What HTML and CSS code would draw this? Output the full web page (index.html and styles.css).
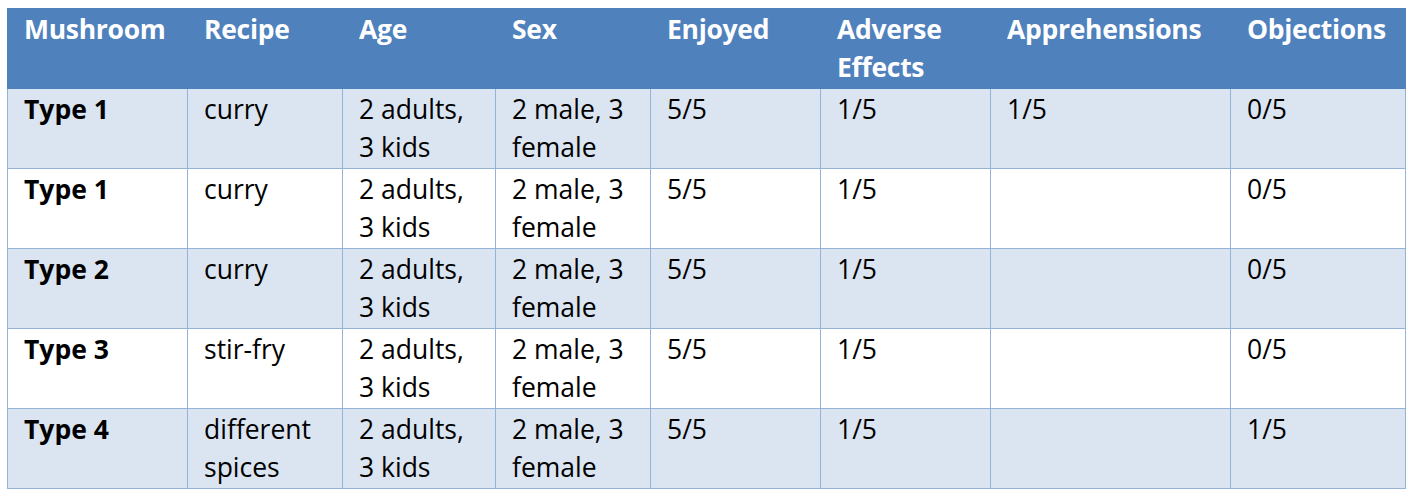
FILE: index.html
```html
<!DOCTYPE html>
<html>
<head>
<meta charset="utf-8">
<link rel="stylesheet" href="styles.css">
</head>
<body>
<table class="grid">
  <colgroup>
    <col class="c1"><col class="c2"><col class="c3"><col class="c4"><col class="c5"><col class="c6"><col class="c7"><col class="c8">
  </colgroup>
  <thead>
    <tr>
      <th>Mushroom</th><th>Recipe</th><th>Age</th><th>Sex</th><th>Enjoyed</th><th>Adverse Effects</th><th>Apprehensions</th><th>Objections</th>
    </tr>
  </thead>
  <tbody>
    <tr class="band">
      <td class="name">Type 1</td><td>curry</td><td>2 adults, 3 kids</td><td>2 male, 3 female</td><td>5/5</td><td>1/5</td><td>1/5</td><td>0/5</td>
    </tr>
    <tr>
      <td class="name">Type 1</td><td>curry</td><td>2 adults, 3 kids</td><td>2 male, 3 female</td><td>5/5</td><td>1/5</td><td></td><td>0/5</td>
    </tr>
    <tr class="band">
      <td class="name">Type 2</td><td>curry</td><td>2 adults, 3 kids</td><td>2 male, 3 female</td><td>5/5</td><td>1/5</td><td></td><td>0/5</td>
    </tr>
    <tr>
      <td class="name">Type 3</td><td>stir-fry</td><td>2 adults, 3 kids</td><td>2 male, 3 female</td><td>5/5</td><td>1/5</td><td></td><td>0/5</td>
    </tr>
    <tr class="band">
      <td class="name">Type 4</td><td>different spices</td><td>2 adults, 3 kids</td><td>2 male, 3 female</td><td>5/5</td><td>1/5</td><td></td><td>1/5</td>
    </tr>
  </tbody>
</table>
</body>
</html>
```
FILE: styles.css
```css
html, body {
  margin: 0;
  padding: 0;
  background: #ffffff;
}
body {
  padding: 8px 0 0 7px;
  font-family: "Open Sans", Lato, "Liberation Sans", sans-serif;
}
.grid {
  border-collapse: collapse;
  table-layout: fixed;
  width: 1398px;
  font-size: 26.5px;
  line-height: 38px;
  color: #000;
}
.c1 { width: 180px; }
.c2 { width: 155px; }
.c3 { width: 153px; }
.c4 { width: 155px; }
.c5 { width: 170px; }
.c6 { width: 170px; }
.c7 { width: 240px; }
.c8 { width: 175px; }
.grid th {
  background: #4f81bd;
  color: #fff;
  font-weight: bold;
  text-align: left;
  vertical-align: top;
  height: 80px;
  padding: 1px 4px 1px 16px;
  box-sizing: border-box;
  border: 1px solid #4f81bd;
  letter-spacing: -0.3px;
}
.grid td {
  vertical-align: top;
  height: 80px;
  padding: 1px 4px 1px 16px;
  box-sizing: border-box;
  border: 1px solid #95b3d7;
}
.grid td:nth-child(3) {
  padding-right: 12px;
}
.grid tr.band td {
  background: #dbe5f1;
}
.grid td.name {
  font-weight: bold;
}
```
